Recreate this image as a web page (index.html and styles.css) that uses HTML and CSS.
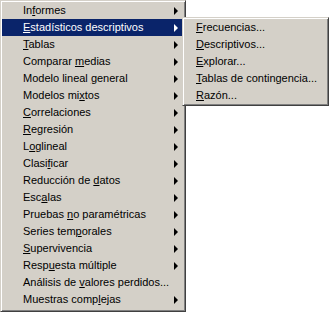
FILE: index.html
```html
<!DOCTYPE html>
<html lang="es">
<head>
    <meta charset="UTF-8">
    <title>Analizar</title>
    <link rel="stylesheet" href="styles.css">
</head>
<body>
<div class="desk">
    <ul class="menu main">
        <li class="sub">In<u>f</u>ormes</li>
        <li class="sub current"><u>E</u>stadísticos descriptivos</li>
        <li class="sub"><u>T</u>ablas</li>
        <li class="sub">Comparar <u>m</u>edias</li>
        <li class="sub">Modelo lineal <u>g</u>eneral</li>
        <li class="sub">Modelos mi<u>x</u>tos</li>
        <li class="sub"><u>C</u>orrelaciones</li>
        <li class="sub"><u>R</u>egresión</li>
        <li class="sub">L<u>o</u>glineal</li>
        <li class="sub">Clasi<u>f</u>icar</li>
        <li class="sub">Reducción de <u>d</u>atos</li>
        <li class="sub">Esc<u>a</u>las</li>
        <li class="sub">Pruebas <u>n</u>o paramétricas</li>
        <li class="sub">Series tem<u>p</u>orales</li>
        <li class="sub"><u>S</u>upervivencia</li>
        <li class="sub">Resp<u>u</u>esta múltiple</li>
        <li>Análisis de <u>v</u>alores perdidos...</li>
        <li class="sub">Muestras comp<u>l</u>ejas</li>
    </ul>
    <ul class="menu popup">
        <li><u>F</u>recuencias...</li>
        <li><u>D</u>escriptivos...</li>
        <li><u>E</u>xplorar...</li>
        <li><u>T</u>ablas de contingencia...</li>
        <li><u>R</u>azón...</li>
    </ul>
</div>
</body>
</html>
```

FILE: styles.css
```css
* {
    margin: 0;
    padding: 0
}

body {
    background-color: #fff;
    font-family: "Liberation Sans", Arial, sans-serif;
    font-size: 11px;
    color: #000;
}

ul {
    list-style: none
}

.desk {
    position: relative;
    width: 329px;
    height: 312px;
    overflow: hidden;
}

.menu {
    background-color: #d4d0c8;
    border-top: 1px solid #d4d0c8;
    border-left: 1px solid #d4d0c8;
    border-right: 1px solid #404040;
    border-bottom: 1px solid #404040;
    box-shadow: inset 1px 1px 0 #fff, inset -1px -1px 0 #808080;
    padding: 1px;
}

.main {
    width: 180px;
    padding-right: 3px;
    height: 308px;
}

.popup {
    position: absolute;
    left: 182px;
    top: 17px;
    width: 143px;
}

.menu li {
    height: 17px;
    line-height: 17px;
    white-space: nowrap;
    position: relative;
}

.main li {
    padding-left: 21px;
}

.popup li {
    padding-left: 12px;
}

.menu u {
    text-decoration: underline;
    text-underline-offset: 1px;
}

.sub:after {
    content: "";
    position: absolute;
    right: 4px;
    top: 5px;
    border-left: 4px solid #000;
    border-top: 4px solid transparent;
    border-bottom: 4px solid transparent;
}

.menu li.current {
    background-color: #0a246a;
    color: #fff;
}

.menu li.current:after {
    border-left-color: #fff;
}
```
